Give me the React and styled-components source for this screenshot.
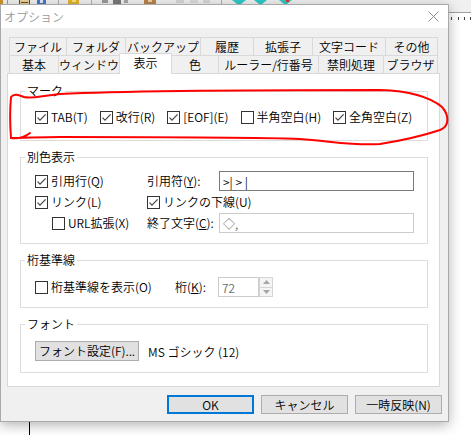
import React from 'react';
import styled, { createGlobalStyle } from 'styled-components';

const Global = createGlobalStyle`
  html, body { margin: 0; padding: 0; background: #fff; overflow: hidden; }
  body {
    font-family: "Noto Sans CJK JP", "Noto Sans", sans-serif;
    font-size: 12px;
    font-weight: 350;
    color: #000;
  }
  * { box-sizing: border-box; }
`;

const Desktop = styled.div`
  position: relative;
  width: 471px;
  height: 435px;
  overflow: hidden;
  background: #fff;
  display: flex;
  flex-direction: column;
`;

const AppToolbar = styled.div`
  height: 12px;
  flex: none;
  background: #f0f0f0;
  svg { display: block; }
`;

const Ruler = styled.div`
  height: 9px;
  flex: none;
  border-top: 1px solid #a0a0a0;
  background: #fff;
  svg { display: block; }
`;

const Editor = styled.div`
  flex: 1;
  background: #fff;
  display: flex;
  flex-direction: column;
  justify-content: flex-end;
`;

const GuideLine = styled.div`
  width: 1px;
  height: 14px;
  margin-left: 29px;
  background: #000;
`;

const Dialog = styled.div`
  position: absolute;
  left: 0;
  top: 4px;
  width: 449px;
  height: 418px;
  border: 1px solid #a9a9a9;
  background: #f0f0f0;
  box-shadow: 0 3px 12px rgba(0, 0, 0, 0.3);
  display: flex;
  flex-direction: column;
  z-index: 2;
`;

const TitleBar = styled.div`
  height: 23px;
  flex: none;
  background: #fff;
  display: flex;
  align-items: center;
  justify-content: space-between;
  padding: 0 9px 0 3px;
`;

const Title = styled.span`
  color: #9a9a9a;
  line-height: 16px;
`;

const Client = styled.div`
  flex: 1;
  display: flex;
  flex-direction: column;
  padding: 9px 6px 0 6px;
`;

const TabStrip = styled.div`
  margin-left: 2px;
  display: flex;
  flex-direction: column;
`;

const TabRow = styled.div`
  display: flex;
  align-items: flex-end;
  height: 18px;
`;

const Tab = styled.div`
  width: ${(p) => p.$w}px;
  height: ${(p) => (p.$active ? 21 : 18)}px;
  margin-left: -1px;
  margin-bottom: ${(p) => (p.$active ? -1 : 0)}px;
  &:first-child { margin-left: 0; }
  position: relative;
  z-index: ${(p) => (p.$active ? 3 : 1)};
  border: 1px solid #d9d9d9;
  border-bottom: none;
  background: ${(p) => (p.$active ? '#fff' : '#f0f0f0')};
  display: flex;
  align-items: center;
  justify-content: center;
  white-space: nowrap;
  line-height: 16px;
  padding-bottom: ${(p) => (p.$active ? 2 : 0)}px;
`;

const Panel = styled.div`
  height: 314px;
  margin-right: 2px;
  border: 1px solid #d9d9d9;
  background: #fff;
  padding: 17px 11px 13px 12px;
  display: flex;
  flex-direction: column;
  gap: 16px;
  position: relative;
  z-index: 2;
`;

const Group = styled.div`
  position: relative;
  border: 1px solid #dcdcdc;
  padding: ${(p) => p.$pad};
`;

const Legend = styled.span`
  position: absolute;
  top: -9px;
  left: 4px;
  padding: 0 2px;
  background: #fff;
  line-height: 16px;
  white-space: nowrap;
`;

const MarkRow = styled.div`
  display: flex;
  align-items: center;
  gap: 12px;
  height: 16px;
`;

const CheckLabel = styled.label`
  display: inline-flex;
  align-items: center;
  gap: 3px;
  line-height: 16px;
  white-space: nowrap;
  padding-left: ${(p) => p.$indent || 0}px;
  grid-column: ${(p) => (p.$span ? `span ${p.$span}` : 'auto')};
`;

const Box = styled.span`
  width: 13px;
  height: 13px;
  flex: none;
  border: 1px solid #333;
  background: #fff;
  display: inline-flex;
  align-items: center;
  justify-content: center;
  svg { display: block; }
`;

const ColorGrid = styled.div`
  display: grid;
  grid-template-columns: 112px 72px 1fr;
  grid-auto-rows: 20px;
  row-gap: 1px;
  align-items: center;
`;

const FieldLabel = styled.span`
  line-height: 16px;
  white-space: nowrap;
`;

const Key = styled.span`
  text-decoration: underline;
  text-underline-offset: 1px;
`;

const TextBox = styled.input`
  width: 100%;
  height: 20px;
  margin: 0;
  padding: 0 3px;
  border: 1px solid ${(p) => (p.$disabled ? '#cccccc' : '#7a7a7a')};
  background: #fff;
  color: ${(p) => (p.$disabled ? '#6d6d6d' : '#000')};
  font: inherit;
  font-size: 12px;
  line-height: 18px;
  outline: none;
`;

const GuideGrid = styled.div`
  display: grid;
  grid-template-columns: 140px 43px 41px 14px;
  grid-auto-rows: 20px;
  align-items: center;
`;

const Spin = styled.div`
  height: 20px;
  display: flex;
  flex-direction: column;
`;

const SpinButton = styled.div`
  flex: 1;
  border: 1px solid #d4d4d4;
  border-top-width: ${(p) => (p.$down ? 0 : 1)}px;
  background: #f4f4f4;
  display: flex;
  align-items: center;
  justify-content: center;
  svg { display: block; }
`;

const FontRow = styled.div`
  display: flex;
  align-items: center;
  gap: 9px;
  height: 20px;
`;

const PushButton = styled.button`
  width: ${(p) => p.$w}px;
  height: ${(p) => p.$h}px;
  margin: 0;
  padding: 0;
  border: ${(p) => (p.$default ? '2px solid #0078d7' : '1px solid #adadad')};
  background: #e1e1e1;
  font: inherit;
  font-size: 12px;
  line-height: 16px;
  color: #000;
  white-space: nowrap;
`;

const ButtonBar = styled.div`
  display: flex;
  justify-content: flex-end;
  gap: 7px;
  margin-top: 8px;
`;

const Annotation = styled.svg`
  position: absolute;
  left: 0;
  top: 0;
  z-index: 10;
  pointer-events: none;
`;

const Check = () => (
  <svg width="11" height="11" viewBox="0 0 11 11">
    <polyline points="1.5,5.6 4,8.1 9.6,2.4" fill="none" stroke="#444" strokeWidth="1.2" />
  </svg>
);

const Checkbox = ({ checked, children, indent, span }) => (
  <CheckLabel $indent={indent} $span={span}>
    <Box>{checked && <Check />}</Box>
    <span>{children}</span>
  </CheckLabel>
);

const row1 = [
  ['ファイル', 58],
  ['フォルダ', 60],
  ['バックアップ', 76],
  ['履歴', 54],
  ['拡張子', 60],
  ['文字コード', 74],
  ['その他', 53],
];

const row2 = [
  ['基本', 50],
  ['ウィンドウ', 62],
  ['表示', 53, true],
  ['色', 48],
  ['ルーラー/行番号', 101],
  ['禁則処理', 66],
  ['ブラウザ', 55],
];

const marks = [
  ['TAB(T)', true],
  ['改行(R)', true],
  ['[EOF](E)', true],
  ['半角空白(H)', false],
  ['全角空白(Z)', true],
];

const ToolbarIcons = () => (
  <svg width="471" height="12" viewBox="0 0 471 12">
    <rect x="0" y="0" width="3" height="4" fill="#c8922a" />
    <rect x="7" y="0" width="1" height="4" fill="#9a9a9a" />
    <rect x="19" y="0" width="11" height="4" fill="#e8d29a" />
    <rect x="19" y="0" width="1" height="4" fill="#6b4a1a" />
    <rect x="29" y="0" width="1" height="4" fill="#6b4a1a" />
    <rect x="21" y="2" width="7" height="1" fill="#6b4a1a" />
    <rect x="37" y="0" width="9" height="4" fill="#4a78c8" />
    <rect x="40" y="0" width="3" height="3" fill="#dfe8f6" />
    <rect x="58" y="0" width="1" height="4" fill="#b0b0b0" />
    <rect x="68" y="0" width="11" height="4" fill="#e6b32e" />
    <rect x="72" y="0" width="4" height="2" fill="#f7e27a" />
    <rect x="91" y="0" width="1" height="4" fill="#b0b0b0" />
    <rect x="102" y="0" width="6" height="3" fill="#9a9a9a" />
    <rect x="113" y="0" width="8" height="4" fill="#7a7a7a" />
    <rect x="124" y="0" width="4" height="3" fill="#a8a8a8" />
    <rect x="144" y="0" width="12" height="4" fill="#b8844a" />
    <rect x="148" y="0" width="4" height="2" fill="#e9d2a9" />
    <rect x="176" y="0" width="8" height="3" fill="#d6d6d6" />
    <rect x="190" y="0" width="8" height="3" fill="#dadada" />
    <rect x="203" y="0" width="7" height="3" fill="#d6d6d6" />
    <rect x="221" y="0" width="1" height="4" fill="#b0b0b0" />
    <polygon points="232,0 246,0 241,4 237,4" fill="#2ec8c8" />
    <polygon points="254,0 267,0 262,4 259,4" fill="#2ec8c8" />
    <polygon points="279,0 292,0 287,4 284,4" fill="#2ec8c8" />
    <rect x="286" y="0" width="3" height="2" fill="#d83a2a" />
  </svg>
);

const RulerTicks = () => (
  <svg width="471" height="8" viewBox="0 0 471 8">
    {[451, 458, 464, 470].map((x) => (
      <rect key={x} x={x} y="4" width="1" height="3" fill="#404040" />
    ))}
  </svg>
);

export default function App() {
  return (
    <>
      <Global />
      <Desktop>
        <AppToolbar>
          <ToolbarIcons />
        </AppToolbar>
        <Ruler>
          <RulerTicks />
        </Ruler>
        <Editor>
          <GuideLine />
        </Editor>

        <Dialog>
          <TitleBar>
            <Title>オプション</Title>
            <svg width="11" height="11" viewBox="0 0 11 11">
              <path d="M0.5 0.5 L10.5 10.5 M10.5 0.5 L0.5 10.5" stroke="#8a8a8a" strokeWidth="1" fill="none" />
            </svg>
          </TitleBar>
          <Client>
            <TabStrip>
              <TabRow>
                {row1.map(([t, w]) => (
                  <Tab key={t} $w={w}>{t}</Tab>
                ))}
              </TabRow>
              <TabRow>
                {row2.map(([t, w, a]) => (
                  <Tab key={t} $w={w} $active={a}>{t}</Tab>
                ))}
              </TabRow>
            </TabStrip>
            <Panel>
              <Group $pad="17px 14px 15px">
                <Legend>マーク</Legend>
                <MarkRow>
                  {marks.map(([t, c]) => (
                    <Checkbox key={t} checked={c}>{t}</Checkbox>
                  ))}
                </MarkRow>
              </Group>

              <Group $pad="13px 13px 10px 14px">
                <Legend>別色表示</Legend>
                <ColorGrid>
                  <Checkbox checked>引用行(Q)</Checkbox>
                  <FieldLabel>引用符(<Key>Y</Key>):</FieldLabel>
                  <TextBox readOnly value=">| > |" />
                  <Checkbox checked>リンク(L)</Checkbox>
                  <Checkbox checked span={2}>リンクの下線(U)</Checkbox>
                  <Checkbox indent={17}>URL拡張(X)</Checkbox>
                  <FieldLabel>終了文字(<Key>C</Key>):</FieldLabel>
                  <TextBox readOnly $disabled value="◇," />
                </ColorGrid>
              </Group>

              <Group $pad="16px 10px 10px 14px">
                <Legend>桁基準線</Legend>
                <GuideGrid>
                  <Checkbox>桁基準線を表示(O)</Checkbox>
                  <FieldLabel>桁(<Key>K</Key>):</FieldLabel>
                  <TextBox readOnly $disabled value="72" />
                  <Spin>
                    <SpinButton>
                      <svg width="7" height="4" viewBox="0 0 7 4"><polygon points="3.5,0 7,4 0,4" fill="#a6a6a6" /></svg>
                    </SpinButton>
                    <SpinButton $down>
                      <svg width="7" height="4" viewBox="0 0 7 4"><polygon points="0,0 7,0 3.5,4" fill="#a6a6a6" /></svg>
                    </SpinButton>
                  </Spin>
                </GuideGrid>
              </Group>

              <Group $pad="16px 14px 11px">
                <Legend>フォント</Legend>
                <FontRow>
                  <PushButton $w={104} $h={20}>フォント設定(F)...</PushButton>
                  <span>MS ゴシック (12)</span>
                </FontRow>
              </Group>
            </Panel>
            <ButtonBar>
              <PushButton $w={87} $h={19} $default>OK</PushButton>
              <PushButton $w={87} $h={19}>キャンセル</PushButton>
              <PushButton $w={87} $h={19}>一時反映(N)</PushButton>
            </ButtonBar>
          </Client>
        </Dialog>

        <Annotation width="471" height="435" viewBox="0 0 471 435">
          <path
            d="M 30 133 C 25 137, 18 139, 11 138 C 10 125, 10 108, 11 97 C 14 93, 19 95, 24 97 C 32 99, 40 96, 60 94 C 120 91, 250 90, 380 90 C 410 91, 430 97, 442 107 C 449 115, 450 126, 440 130 C 425 135, 405 140, 380 144 C 355 146, 330 141, 300 139 C 250 137, 150 137, 60 137 C 40 137, 25 138, 12 138"
            fill="none"
            stroke="#ff0000"
            strokeWidth="2"
            strokeLinecap="round"
          />
        </Annotation>
      </Desktop>
    </>
  );
}
